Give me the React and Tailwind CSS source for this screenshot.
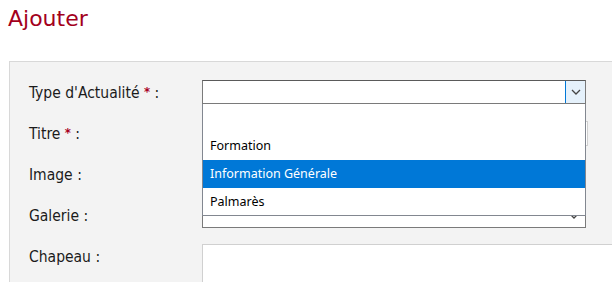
import React from "react";

const labelFont = { fontFamily: "'DejaVu Sans Condensed', 'DejaVu Sans', Verdana, sans-serif" };
const titleFont = { fontFamily: "'DejaVu Sans', Verdana, sans-serif" };

const Chevron = ({ className = "" }) => (
  <svg width="10" height="6" viewBox="0 0 10 6" className={className}>
    <path d="M1 1 L5 5 L9 1" fill="none" stroke="#444" strokeWidth="1.3" />
  </svg>
);

const Label = ({ children, required, className = "" }) => (
  <div
    className={`w-[173px] shrink-0 text-[15.5px] leading-[20px] text-[#1b1b1b] ${className}`}
    style={labelFont}
  >
    {children}{" "}
    {required && (
      <>
        <span className="text-[#a8001e] text-[13px] font-bold align-[2px]">*</span>{" "}
      </>
    )}
    :
  </div>
);

const Row = ({ className = "", children }) => (
  <div className={`flex items-center ${className}`}>{children}</div>
);

const options = ["", "Formation", "Information Générale", "Palmarès"];

export default function App() {
  return (
    <div className="w-[612px] h-[282px] overflow-hidden bg-white relative">
      <h1
        className="pl-[8px] pt-[4px] text-[22px] leading-[30px] text-[#a3001c]"
        style={titleFont}
      >
        Ajouter
      </h1>

      <div className="mt-[27px] ml-[9px] w-[640px] h-[260px] border border-[#d8d8d8] bg-[#f3f3f3] pl-[19px] pt-[18px]">
        <Row>
          <Label required>Type d'Actualité</Label>
          <div className="w-[384px] h-[24px] bg-white border border-[#7a7a7a] border-t-[#5a5a5a] flex justify-end">
            <div className="w-[20px] h-full bg-[#e5f1fb] border-l border-[#0078d7] flex items-center justify-center">
              <Chevron />
            </div>
          </div>
        </Row>

        <Row className="mt-[17px]">
          <Label required>Titre</Label>
          <div className="w-[386px] h-[25px] bg-white border border-[#cfcfcf]" />
        </Row>

        <Row className="mt-[17px]">
          <Label>Image</Label>
          <div className="w-[386px] h-[24px]" />
        </Row>

        <Row className="mt-[17px]">
          <Label>Galerie</Label>
          <div className="w-[384px] h-[24px] bg-white border border-[#7a7a7a] flex justify-end items-center pr-[6px]">
            <Chevron />
          </div>
        </Row>

        <Row className="mt-[16px] items-start">
          <Label className="mt-[3px]">Chapeau</Label>
          <div className="w-[420px] h-[80px] bg-white border border-[#d0d0d0]" />
        </Row>
      </div>

      <ul
        className="absolute left-[202px] top-[104px] w-[384px] h-[112px] bg-white border border-[#828790] border-t-0 text-[12.5px] text-black"
        style={{ fontFamily: "'Noto Sans', 'Open Sans', sans-serif" }}
      >
        {options.map((o) => (
          <li
            key={o || "blank"}
            className={`h-[28px] pl-[7px] flex items-center ${
              o === "Information Générale" ? "bg-[#0078d7] text-white" : ""
            }`}
          >
            {o}
          </li>
        ))}
      </ul>
    </div>
  );
}
